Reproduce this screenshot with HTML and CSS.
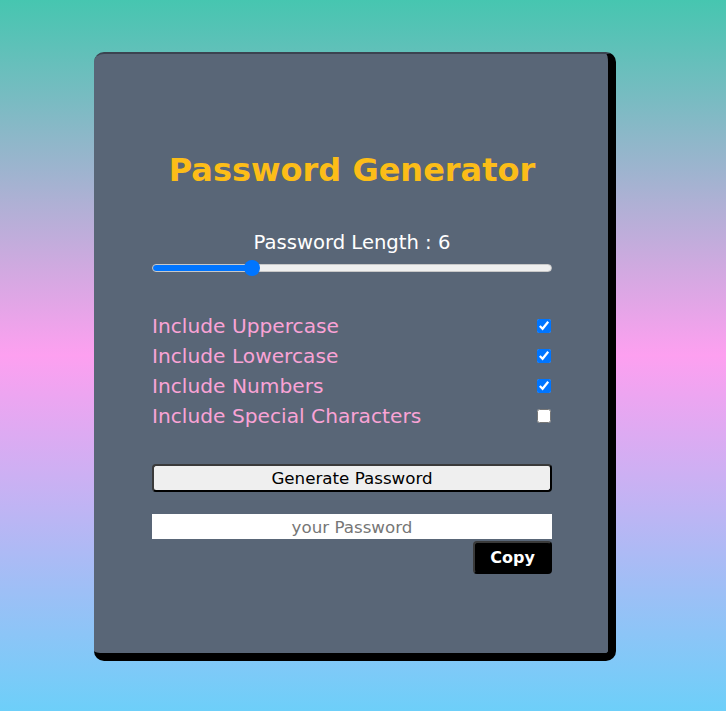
FILE: index.html
```html
<!DOCTYPE html>
<html lang="en">
<head>
<meta charset="utf-8">
<title>Password Generator</title>
<link rel="stylesheet" href="styles.css">
</head>
<body>
<div class="card">
  <h1 class="title">Password Generator</h1>
  <div class="length">Password Length : 6</div>
  <input class="slider" type="range" min="1" max="22" value="6" style="--fill: 24.5%">
  <div class="options">
    <label class="option"><span>Include Uppercase</span><input type="checkbox" checked></label>
    <label class="option"><span>Include Lowercase</span><input type="checkbox" checked></label>
    <label class="option"><span>Include Numbers</span><input type="checkbox" checked></label>
    <label class="option"><span>Include Special Characters</span><input type="checkbox"></label>
  </div>
  <button class="generate">Generate Password</button>
  <input class="output" type="text" placeholder="your Password">
  <div class="copy-row"><button class="copy">Copy</button></div>
</div>
</body>
</html>
```
FILE: styles.css
```css
html, body {
  margin: 0;
  padding: 0;
}
body {
  height: 711px;
  background: linear-gradient(180deg, #46c6b0 0%, #fda0f0 50%, #6dcff9 100%);
  font-family: "DejaVu Sans", "Open Sans", sans-serif;
  display: flex;
  justify-content: center;
  align-items: flex-start;
}
.card {
  box-sizing: border-box;
  margin-top: 52px;
  margin-right: 16px;
  width: 522px;
  height: 609px;
  background: #596677;
  border-top: 2px solid #3b4350;
  border-right: 8px solid #000;
  border-bottom: 8px solid #000;
  border-left: 0;
  border-radius: 10px;
  padding: 96px 56px 0 58px;
  display: flex;
  flex-direction: column;
}
.title {
  margin: 0;
  font-size: 32px;
  line-height: 40px;
  font-weight: 700;
  color: #fcbd18;
  text-align: center;
}
.length {
  margin-top: 41px;
  font-size: 19.6px;
  line-height: 24px;
  color: #fff;
  text-align: center;
}
.slider {
  -webkit-appearance: none;
  appearance: none;
  margin: 5px 0 0 0;
  width: 400px;
  height: 16px;
  background: transparent;
}
.slider::-webkit-slider-runnable-track {
  height: 8px;
  border-radius: 4px;
  background: linear-gradient(90deg, #0075ff 0, #0075ff var(--fill), #efefef var(--fill), #efefef 100%);
  border: 1px solid #c8c8c8;
  box-sizing: border-box;
}
.slider::-webkit-slider-thumb {
  -webkit-appearance: none;
  width: 16px;
  height: 16px;
  border-radius: 50%;
  background: #0075ff;
  margin-top: -5px;
}
.options {
  margin-top: 35px;
  display: flex;
  flex-direction: column;
}
.option {
  display: flex;
  justify-content: space-between;
  align-items: center;
  height: 30px;
  font-size: 20.2px;
  color: #f9a3d6;
}
.option input {
  margin: 0 1px 0 0;
  width: 14px;
  height: 14px;
}
.generate {
  margin-top: 33px;
  width: 400px;
  height: 28px;
  background: #efefef;
  border: 2px solid;
  border-color: #3a3a3a #000 #000 #3a3a3a;
  border-radius: 4px;
  font-family: inherit;
  font-size: 16.7px;
  color: #000;
  padding: 0;
}
.output {
  margin: 22px 0 0 0;
  box-sizing: border-box;
  width: 400px;
  height: 25px;
  border: none;
  padding: 0;
  background: #fff;
  font-family: inherit;
  font-size: 16.7px;
  text-align: center;
}
.output::placeholder {
  color: #767676;
}
.copy-row {
  display: flex;
  justify-content: flex-end;
  margin-top: 2px;
}
.copy {
  width: 79px;
  height: 33px;
  background: #000;
  color: #fff;
  border: 2px solid;
  border-color: #3a3a3a #000 #000 #3a3a3a;
  border-radius: 4px;
  font-family: inherit;
  font-weight: 700;
  font-size: 16px;
  padding: 0;
}
```
